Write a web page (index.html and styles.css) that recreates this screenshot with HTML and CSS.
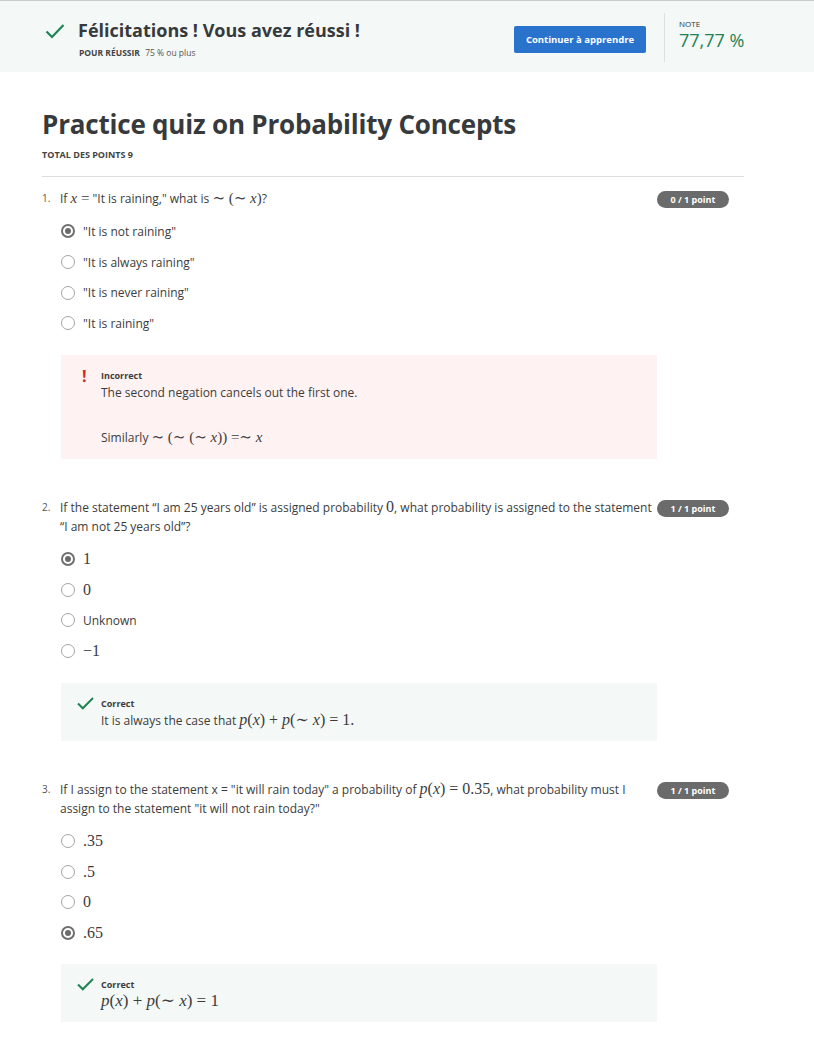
FILE: index.html
```html
<!DOCTYPE html>
<html lang="fr">
<head>
<meta charset="utf-8">
<title>Practice quiz on Probability Concepts</title>
<link rel="stylesheet" href="styles.css">
</head>
<body>
<header class="banner">
  <div class="banner-inner">
    <svg class="pass-check" width="20" height="16" viewBox="0 0 20 16"><path d="M1.5 8.5 L7 14 L18.5 2" fill="none" stroke="#1f8354" stroke-width="2.2"/></svg>
    <div class="pass-text">
      <div class="pass-title">Félicitations ! Vous avez réussi !</div>
      <div class="pass-sub"><span class="pass-label">POUR RÉUSSIR</span> 75 % ou plus</div>
    </div>
    <button class="btn-continue">Continuer à apprendre</button>
    <div class="grade">
      <div class="grade-label">NOTE</div>
      <div class="grade-value">77,77 %</div>
    </div>
  </div>
</header>

<main class="quiz">
  <h1 class="quiz-title">Practice quiz on Probability Concepts</h1>
  <div class="total">TOTAL DES POINTS 9</div>
  <hr class="rule">

  <section class="question">
    <div class="q-main">
      <div class="q-prompt"><span class="q-num">1.</span><div class="q-text">If <span class="m"><span class="mi">x</span> =</span> "It is raining," what is <span class="m">∼ (∼ <span class="mi">x</span>)</span>?</div></div>
      <ul class="options">
        <li class="opt"><span class="radio on"></span><span>"It is not raining"</span></li>
        <li class="opt"><span class="radio"></span><span>"It is always raining"</span></li>
        <li class="opt"><span class="radio"></span><span>"It is never raining"</span></li>
        <li class="opt"><span class="radio"></span><span>"It is raining"</span></li>
      </ul>
      <div class="feedback bad">
        <span class="fb-icon bang">!</span>
        <div class="fb-body">
          <div class="fb-label">Incorrect</div>
          <p class="fb-text">The second negation cancels out the first one.</p>
          <p class="fb-text gap">Similarly <span class="m">∼ (∼ (∼ <span class="mi">x</span>)) =∼ <span class="mi">x</span></span></p>
        </div>
      </div>
    </div>
    <div class="badge">0 / 1 point</div>
  </section>

  <section class="question">
    <div class="q-main">
      <div class="q-prompt"><span class="q-num">2.</span><div class="q-text">If the statement “I am 25 years old” is assigned probability <span class="m big">0</span>, what probability is assigned to the statement “I am not 25 years old”?</div></div>
      <ul class="options">
        <li class="opt"><span class="radio on"></span><span class="m big">1</span></li>
        <li class="opt"><span class="radio"></span><span class="m big">0</span></li>
        <li class="opt"><span class="radio"></span><span>Unknown</span></li>
        <li class="opt"><span class="radio"></span><span class="m big">−1</span></li>
      </ul>
      <div class="feedback good">
        <svg class="fb-icon" width="17" height="13" viewBox="0 0 17 13"><path d="M1 6.5 L5.8 11.3 L16 1" fill="none" stroke="#1f8354" stroke-width="2"/></svg>
        <div class="fb-body">
          <div class="fb-label">Correct</div>
          <p class="fb-text">It is always the case that <span class="m big"><span class="mi">p</span>(<span class="mi">x</span>) + <span class="mi">p</span>(∼ <span class="mi">x</span>) = 1.</span></p>
        </div>
      </div>
    </div>
    <div class="badge">1 / 1 point</div>
  </section>

  <section class="question">
    <div class="q-main">
      <div class="q-prompt"><span class="q-num">3.</span><div class="q-text">If I assign to the statement x = "it will rain today" a probability of <span class="m big"><span class="mi">p</span>(<span class="mi">x</span>) = 0.35</span>, what probability must I assign to the statement "it will not rain today?"</div></div>
      <ul class="options">
        <li class="opt"><span class="radio"></span><span class="m big">.35</span></li>
        <li class="opt"><span class="radio"></span><span class="m big">.5</span></li>
        <li class="opt"><span class="radio"></span><span class="m big">0</span></li>
        <li class="opt"><span class="radio on"></span><span class="m big">.65</span></li>
      </ul>
      <div class="feedback good">
        <svg class="fb-icon" width="17" height="13" viewBox="0 0 17 13"><path d="M1 6.5 L5.8 11.3 L16 1" fill="none" stroke="#1f8354" stroke-width="2"/></svg>
        <div class="fb-body">
          <div class="fb-label">Correct</div>
          <p class="fb-text"><span class="m bigger"><span class="mi">p</span>(<span class="mi">x</span>) + <span class="mi">p</span>(∼ <span class="mi">x</span>) = 1</span></p>
        </div>
      </div>
    </div>
    <div class="badge">1 / 1 point</div>
  </section>
</main>
</body>
</html>
```

FILE: styles.css
```css
* { box-sizing: border-box; }

body {
  margin: 0;
  font-family: "Open Sans", "Liberation Sans", sans-serif;
  color: #3c3c3c;
  background: #fff;
  border-top: 1px solid #c9cccb;
}

/* banner */
.banner {
  background: #f4f8f7;
  height: 71px;
}
.banner-inner {
  display: flex;
  align-items: center;
  height: 100%;
  padding-left: 45px;
  width: 760px;
}
.pass-check {
  flex: none;
  margin-right: 13px;
  margin-top: -12px;
}
.pass-text {
  flex: 1;
  padding-top: 2px;
}
.pass-title {
  font-size: 18px;
  font-weight: 700;
  color: #373a3c;
  line-height: 24px;
}
.pass-sub {
  font-size: 8.5px;
  color: #555;
  margin-top: 5px;
  margin-left: 1px;
}
.pass-label {
  font-weight: 700;
  color: #444;
  margin-right: 3px;
}
.btn-continue {
  flex: none;
  width: 132px;
  height: 27px;
  margin-top: 6px;
  border: 0;
  border-radius: 2px;
  background: #2a73cc;
  color: #fff;
  font-family: "Open Sans", sans-serif;
  font-size: 9.5px;
  font-weight: 700;
  padding: 0;
}
.grade {
  flex: none;
  align-self: stretch;
  margin: 12px 0 10px 18px;
  border-left: 1px solid #dde2e0;
  padding-left: 14px;
  width: 96px;
  white-space: nowrap;
}
.grade-label {
  font-size: 8px;
  color: #333;
  margin-top: 5px;
  line-height: 12px;
}
.grade-value {
  font-size: 18px;
  color: #1f8354;
  line-height: 20px;
}

/* quiz */
.quiz {
  padding: 0 0 40px 42px;
  width: 744px;
}
.quiz-title {
  margin: 35px 0 0;
  font-size: 26px;
  font-weight: 700;
  color: #373a3c;
  line-height: 34px;
  letter-spacing: -0.2px;
}
.total {
  font-size: 9px;
  font-weight: 700;
  color: #444;
  margin-top: 8px;
  line-height: 12px;
}
.rule {
  border: 0;
  border-top: 1px solid #dcdcdc;
  margin: 15px 0 12px;
}

.question {
  display: grid;
  grid-template-columns: 1fr 72px;
  align-items: start;
  padding-right: 15px;
  margin-bottom: 39px;
}
.q-prompt {
  display: flex;
  font-size: 12px;
  line-height: 19px;
}
.q-num {
  flex: none;
  width: 18px;
  font-size: 10px;
  color: #555;
}
.q-text {
  flex: 1;
  padding-right: 4px;
}
.badge {
  margin-top: 2px;
  height: 17px;
  border-radius: 9px;
  background: #6b6b6b;
  color: #fff;
  font-size: 9px;
  font-weight: 700;
  line-height: 17px;
  text-align: center;
}

.options {
  list-style: none;
  margin: 8px 0 0 19px;
  padding: 0;
}
.opt {
  display: flex;
  align-items: center;
  height: 30.7px;
  font-size: 12px;
}
.radio {
  flex: none;
  width: 14px;
  height: 14px;
  border: 1px solid #a5a5a5;
  border-radius: 50%;
  margin-right: 8px;
  position: relative;
}
.radio.on {
  border: 2px solid #707070;
}
.radio.on::after {
  content: "";
  position: absolute;
  left: 2px;
  top: 2px;
  width: 6px;
  height: 6px;
  border-radius: 50%;
  background: #6b6b6b;
}

.m {
  font-family: "Liberation Serif", "DejaVu Serif", serif;
  font-size: 15px;
  line-height: 1;
}
.m.big { font-size: 16px; }
.m.bigger { font-size: 17px; }
.mi { font-style: italic; }

.feedback {
  display: flex;
  margin: 16px 0 0 19px;
  padding: 14px 10px 10px 16px;
}
.feedback.bad { background: #fff2f2; padding-bottom: 11px; }
.feedback.good { background: #f4f8f6; }
.fb-icon {
  flex: none;
  width: 24px;
}
svg.fb-icon {
  width: 17px;
  margin-right: 7px;
  margin-top: 0px;
}
.bang {
  color: #d12b2b;
  font-weight: 700;
  font-size: 16px;
  line-height: 14px;
  padding-left: 5px;
}
.fb-label {
  font-size: 9px;
  font-weight: 700;
  color: #3c3c3c;
  line-height: 14px;
}
.fb-text {
  margin: 0;
  font-size: 12px;
  line-height: 20px;
}
.fb-text.gap { margin-top: 25px; }
```
